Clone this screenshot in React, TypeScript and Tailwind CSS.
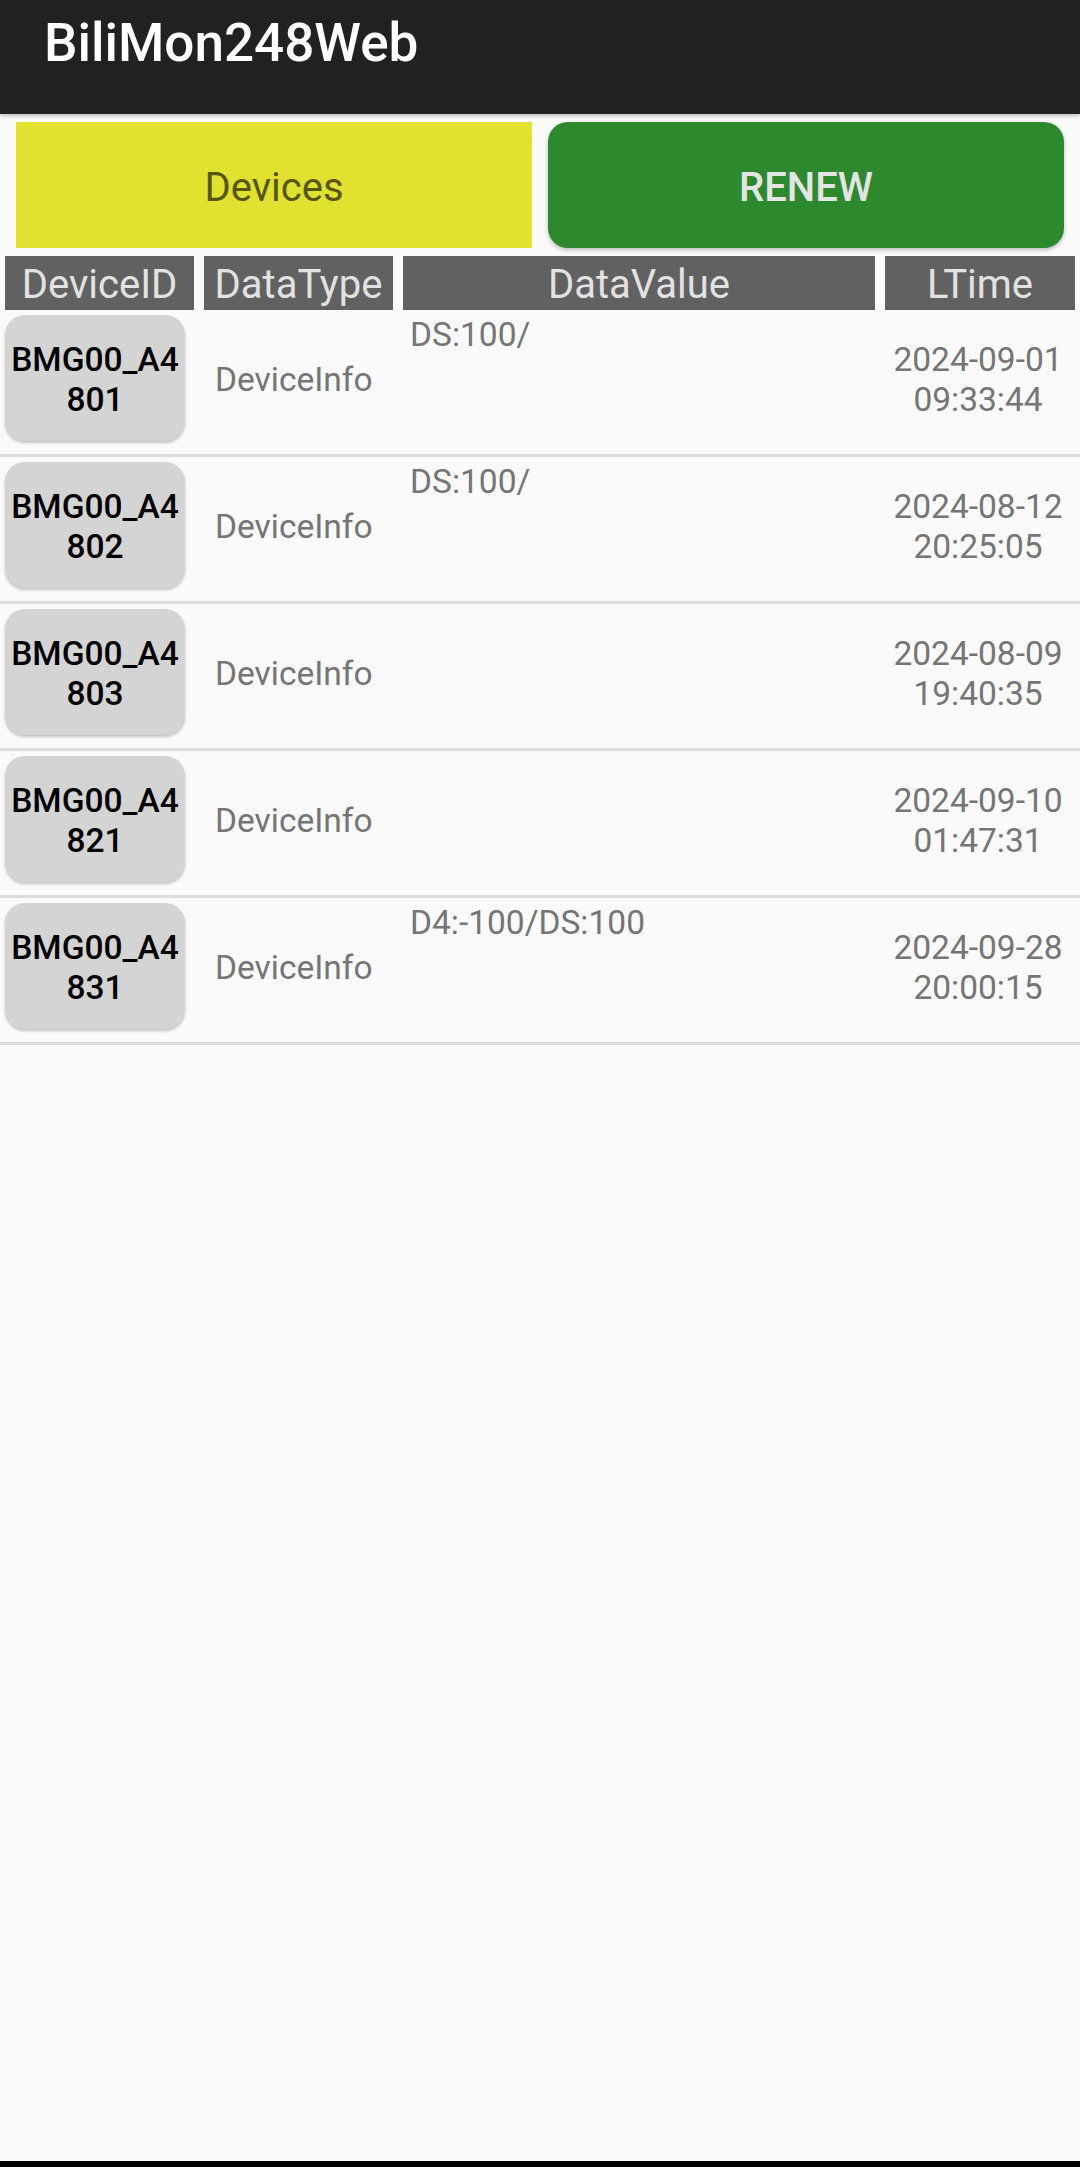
import React from "react";

type Row = {
  id: string;
  dataType: string;
  value: string;
  date: string;
  time: string;
};

const rows: Row[] = [
  { id: "801", dataType: "DeviceInfo", value: "DS:100/", date: "2024-09-01", time: "09:33:44" },
  { id: "802", dataType: "DeviceInfo", value: "DS:100/", date: "2024-08-12", time: "20:25:05" },
  { id: "803", dataType: "DeviceInfo", value: "", date: "2024-08-09", time: "19:40:35" },
  { id: "821", dataType: "DeviceInfo", value: "", date: "2024-09-10", time: "01:47:31" },
  { id: "831", dataType: "DeviceInfo", value: "D4:-100/DS:100", date: "2024-09-28", time: "20:00:15" },
];

export default function App() {
  return (
    <div className="min-h-[2167px] flex flex-col bg-[#fafafa] font-['Roboto',sans-serif]">
      {/* app bar */}
      <div className="h-[114px] bg-[#212121] pl-[44px] pt-[12px] shadow-[0_2px_4px_rgba(0,0,0,0.25)] relative z-10">
        <h1 className="text-[53px] leading-[62px] font-medium text-white">BiliMon248Web</h1>
      </div>

      {/* buttons */}
      <div className="flex gap-[16px] px-[16px] mt-[8px]">
        <button className="w-[516px] h-[126px] pt-[6px] bg-[#e1e130] text-[#56560f] text-[40px]">
          Devices
        </button>
        <button className="w-[516px] h-[126px] pt-[6px] bg-[#2d892d] text-[#e4e4e4] text-[40px] font-medium rounded-[20px] shadow-[0_2px_4px_rgba(0,0,0,0.25)]">
          RENEW
        </button>
      </div>

      {/* table header */}
      <div className="flex gap-[10px] px-[5px] mt-[8px] text-[40px] leading-[50px] text-[#e2e2e2]">
        <div className="w-[189px] h-[54px] pt-[4px] bg-[#616161] text-center">DeviceID</div>
        <div className="w-[189px] h-[54px] pt-[4px] bg-[#616161] text-center">DataType</div>
        <div className="w-[472px] h-[54px] pt-[4px] bg-[#616161] text-center">DataValue</div>
        <div className="w-[190px] h-[54px] pt-[4px] bg-[#616161] text-center">LTime</div>
      </div>

      {/* rows */}
      <div className="flex flex-col">
        {rows.map((r) => (
          <div
            key={r.id}
            className="h-[147px] flex gap-[10px] px-[5px] pt-[5px] border-b-[3px] border-[#dcdcdc] text-[33.5px] leading-[40px]"
          >
            <div className="w-[189px]">
              <button className="w-[180px] h-[126px] pt-[3px] rounded-[20px] bg-[#d4d4d4] text-black font-medium flex flex-col items-center justify-center shadow-[0_2px_3px_rgba(0,0,0,0.22)]">
                <span>BMG00_A4</span>
                <span>{r.id}</span>
              </button>
            </div>
            <div className="w-[189px] h-[126px] pt-[3px] flex items-center pl-[11px] text-[#757575]">
              {r.dataType}
            </div>
            <div className="w-[472px] pl-[7px] text-[#757575]">{r.value}</div>
            <div className="w-[190px] h-[126px] pt-[4px] pr-[4px] flex flex-col items-center justify-center text-[#757575]">
              <span>{r.date}</span>
              <span>{r.time}</span>
            </div>
          </div>
        ))}
      </div>

      <div className="flex-1" />
      <div className="h-[6px] bg-black" />
    </div>
  );
}
